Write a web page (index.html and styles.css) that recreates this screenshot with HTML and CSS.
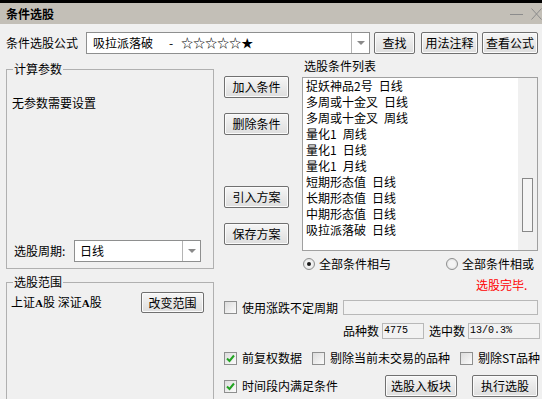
FILE: index.html
```html
<!DOCTYPE html>
<html lang="zh-CN">
<head>
    <meta charset="UTF-8">
    <title>条件选股</title>
    <link rel="stylesheet" href="styles.css">
</head>
<body>
<div class="window">
    <div class="titlebar">
        <span class="title">条件选股</span>
        <span class="win-ctl">
            <svg width="13" height="10" viewBox="0 0 13 10"><path d="M0 5.5H13" stroke="#8c8c8c" stroke-width="1"/></svg>
            <svg width="11" height="12" viewBox="0 0 11 12"><path d="M0.5 0.5L10.5 11.5M10.5 0.5L0.5 11.5" stroke="#8c8c8c" stroke-width="1"/></svg>
        </span>
    </div>

    <div class="client">
        <div class="formula-row">
            <span class="formula-label">条件选股公式</span>
            <div class="combo formula-combo">
                <span class="combo-text"><span>吸拉派落破</span><span class="dash">-</span><span class="stars">☆☆☆☆☆★</span></span>
                <span class="combo-arrow"><i></i></span>
            </div>
            <button class="btn btn-find">查找</button>
            <button class="btn btn-note">用法注释</button>
            <button class="btn btn-view">查看公式</button>
        </div>

        <div class="main">
            <div class="left-col">
                <fieldset class="group group-calc">
                    <legend>计算参数</legend>
                    <p class="no-param">无参数需要设置</p>
                    <div class="period-row">
                        <span class="period-label">选股周期:</span>
                        <div class="combo period-combo">
                            <span class="combo-text">日线</span>
                            <span class="combo-arrow"><i></i></span>
                        </div>
                    </div>
                </fieldset>
                <fieldset class="group group-range">
                    <legend>选股范围</legend>
                    <div class="range-row">
                        <span class="market">上证<b>A</b>股 深证<b>A</b>股</span>
                        <button class="btn btn-range">改变范围</button>
                    </div>
                </fieldset>
            </div>

            <div class="right-col">
                <div class="upper">
                    <div class="btn-col">
                        <button class="btn btn-add">加入条件</button>
                        <button class="btn btn-del">删除条件</button>
                        <button class="btn btn-load">引入方案</button>
                        <button class="btn btn-save">保存方案</button>
                    </div>
                    <div class="list-col">
                        <div class="list-title">选股条件列表</div>
                        <div class="listbox">
                            <ul class="cond-list" id="condList"></ul>
                            <div class="scrollbar"><div class="thumb"></div></div>
                        </div>
                        <div class="radio-row">
                            <label class="radio"><span class="radio-dot checked"></span>全部条件相与</label>
                            <label class="radio"><span class="radio-dot"></span>全部条件相或</label>
                        </div>
                        <div class="status">选股完毕.</div>
                    </div>
                </div>

                <div class="options">
                    <div class="opt-row row-period">
                        <span class="check"></span>
                        <span>使用涨跌不定周期</span>
                        <span class="field field-period"></span>
                    </div>
                    <div class="opt-row row-count">
                        <span>品种数</span>
                        <span class="field field-total">4775</span>
                        <span class="count-label">选中数</span>
                        <span class="field field-picked">13/0.3%</span>
                    </div>
                    <div class="opt-row row-adj">
                        <span class="check checked"></span>
                        <span>前复权数据</span>
                        <span class="check check-gap"></span>
                        <span>剔除当前未交易的品种</span>
                        <span class="check check-gap"></span>
                        <span>剔除ST品种</span>
                    </div>
                    <div class="opt-row row-time">
                        <span class="check checked"></span>
                        <span>时间段内满足条件</span>
                        <button class="btn btn-block">选股入板块</button>
                        <button class="btn btn-run">执行选股</button>
                    </div>
                </div>
            </div>
        </div>
    </div>
</div>

<script>
    let conditions = [
        ["捉妖神品2号", "日线"],
        ["多周或十金叉", "日线"],
        ["多周或十金叉", "周线"],
        ["量化1", "周线"],
        ["量化1", "日线"],
        ["量化1", "月线"],
        ["短期形态值", "日线"],
        ["长期形态值", "日线"],
        ["中期形态值", "日线"],
        ["吸拉派落破", "日线"]
    ];

    let listHtml = "";
    conditions.forEach(item => {
        listHtml += `<li>${item[0]}<span class="period">${item[1]}</span></li>`;
    });
    document.getElementById("condList").innerHTML = listHtml;

    let checkSvg = '<svg width="11" height="11" viewBox="0 0 11 11"><path d="M2 5.5L4.5 8L9 2.5" fill="none" stroke="#22a322" stroke-width="2"/></svg>';
    document.querySelectorAll(".check.checked").forEach(box => {
        box.innerHTML = checkSvg;
    });
</script>
</body>
</html>
```

FILE: styles.css
```css
* {
    box-sizing: border-box;
}
body {
    margin: 0;
    background: #f0f0f0;
    font-family: "Noto Sans CJK SC", "Liberation Sans", sans-serif;
    font-size: 12px;
    line-height: 14px;
    color: #000;
}
.window {
    width: 542px;
    height: 399px;
    overflow: hidden;
    background: #f0f0f0;
}
.titlebar {
    height: 24px;
    border-top: 3px solid #000;
    background: #c3bfb7;
    display: flex;
    align-items: center;
    padding-left: 6px;
}
.title {
    flex: 1;
    font-weight: bold;
}
.win-ctl {
    display: flex;
    align-items: center;
    gap: 8px;
}

/* buttons and inputs */
.btn {
    font-family: inherit;
    font-size: 12px;
    line-height: 14px;
    padding: 0;
    height: 22px;
    border: 1px solid #707070;
    border-radius: 2px;
    background: linear-gradient(#f6f6f6, #e9e9e9 50%, #dedede);
    box-shadow: inset 0 0 0 1px #fbfbfb;
    color: #000;
    white-space: nowrap;
    flex: none;
}
.combo {
    display: flex;
    height: 22px;
    border: 1px solid #8e8f8f;
    background: #fff;
}
.combo-text {
    flex: 1;
    display: flex;
    align-items: center;
    padding-left: 5px;
    white-space: nowrap;
}
.combo-arrow {
    width: 18px;
    border-left: 1px solid #b4b4b4;
    display: flex;
    align-items: center;
    justify-content: center;
}
.combo-arrow i {
    width: 0;
    height: 0;
    border-left: 4px solid transparent;
    border-right: 4px solid transparent;
    border-top: 4px solid #8a8a8a;
}
.field {
    height: 15px;
    border: 1px solid #b8b8b8;
    background: #f2f2f2;
    font-family: "Liberation Mono", monospace;
    font-size: 10px;
    line-height: 13px;
    padding-left: 1px;
}
.check {
    width: 13px;
    height: 13px;
    border: 1px solid #8e8f8f;
    background: linear-gradient(135deg, #dcdcdc, #fbfbfb);
    display: flex;
    align-items: center;
    justify-content: center;
    margin-right: 5px;
}

/* formula row */
.formula-row {
    display: flex;
    align-items: center;
    padding: 8px 0 0 6px;
    height: 30px;
}
.formula-label {
    width: 80px;
}
.formula-combo {
    width: 284px;
}
.formula-combo .combo-text {
    padding-left: 6px;
}
.dash {
    margin-left: 16px;
}
.stars {
    margin-left: 8px;
}
.btn-find {
    margin-left: 4px;
    width: 41px;
}
.btn-note {
    margin-left: 6px;
    width: 57px;
}
.btn-view {
    margin-left: 4px;
    width: 56px;
}

/* layout */
.main {
    display: flex;
    margin-top: 4px;
}
.left-col {
    margin-left: 6px;
    width: 208px;
    padding-top: 4px;
}
.group {
    margin: 0;
    padding: 0 5px;
    border: 1px solid #b0b0b0;
    min-width: 0;
}
.group legend {
    padding: 0 1px;
    margin-left: 1px;
    line-height: 14px;
}
.group-calc {
    height: 207px;
}
.no-param {
    margin: 20px 0 0 0;
}
.period-row {
    display: flex;
    align-items: center;
    margin-top: 130px;
    padding-left: 2px;
}
.period-label {
    width: 60px;
}
.period-combo {
    width: 127px;
}
.group-range {
    margin-top: 6px;
    height: 140px;
}
.range-row {
    display: flex;
    align-items: center;
    margin: 3px 0 0 -1px;
    height: 21px;
}
.market b {
    font-family: "Liberation Serif", serif;
    font-weight: bold;
    font-size: 11px;
}
.btn-range {
    margin-left: auto;
    margin-right: 4px;
    width: 63px;
    height: 21px;
}

.right-col {
    margin-left: 10px;
    width: 314px;
}
.upper {
    display: flex;
}
.btn-col {
    width: 65px;
    padding-top: 18px;
    display: flex;
    flex-direction: column;
}
.btn-col .btn {
    width: 65px;
}
.btn-del,
.btn-save {
    margin-top: 15px;
}
.btn-load {
    margin-top: 51px;
}
.list-col {
    margin-left: 13px;
    width: 236px;
}
.list-title {
    padding: 1px 0 0 2px;
    margin-bottom: 4px;
}
.listbox {
    height: 174px;
    border: 1px solid #a0a0a0;
    background: #fff;
    display: flex;
}
.cond-list {
    flex: 1;
    list-style: none;
    margin: 0;
    padding: 0 0 0 3px;
}
.cond-list li {
    line-height: 16px;
    white-space: nowrap;
}
.cond-list .period {
    margin-left: 6px;
}
.scrollbar {
    width: 19px;
    background: #f0f0f0;
    padding-top: 100px;
}
.thumb {
    margin-left: 4px;
    width: 11px;
    height: 54px;
    border: 1px solid #888;
    background: #f5f5f5;
}
.radio-row {
    display: flex;
    justify-content: space-between;
    margin-top: 6px;
    padding: 0 4px 0 1px;
    height: 14px;
}
.radio {
    display: flex;
    align-items: center;
    gap: 4px;
    white-space: nowrap;
}
.radio-dot {
    width: 12px;
    height: 12px;
    border-radius: 50%;
    border: 1px solid #8e8f8f;
    background: radial-gradient(circle, #f4f4f4 40%, #d6d6d6);
    display: flex;
    align-items: center;
    justify-content: center;
}
.radio-dot.checked::after {
    content: "";
    width: 4px;
    height: 4px;
    border-radius: 50%;
    background: #1a1a1a;
}
.status {
    margin: 7px 0 0 174px;
    height: 14px;
    color: #ff0000;
}

/* options */
.options {
    margin-top: 8px;
}
.opt-row {
    display: flex;
    align-items: center;
}
.opt-row > span {
    white-space: nowrap;
    flex: none;
}
.row-period {
    height: 15px;
}
.opt-row .field-period {
    flex: 1;
    margin-left: 5px;
}
.row-count {
    margin-top: 8px;
    padding-left: 119px;
    height: 16px;
}
.field-total {
    margin-left: 3px;
    width: 42px;
    height: 16px;
}
.count-label {
    margin-left: 5px;
}
.field-picked {
    margin-left: 3px;
    width: 72px;
    height: 16px;
}
.row-adj {
    margin-top: 12px;
    height: 14px;
}
.check-gap {
    margin-left: 10px;
}
.row-time {
    margin-top: 10px;
    height: 22px;
}
.btn-block {
    margin-left: auto;
    width: 72px;
}
.btn-run {
    margin-left: 15px;
    width: 66px;
}
```
